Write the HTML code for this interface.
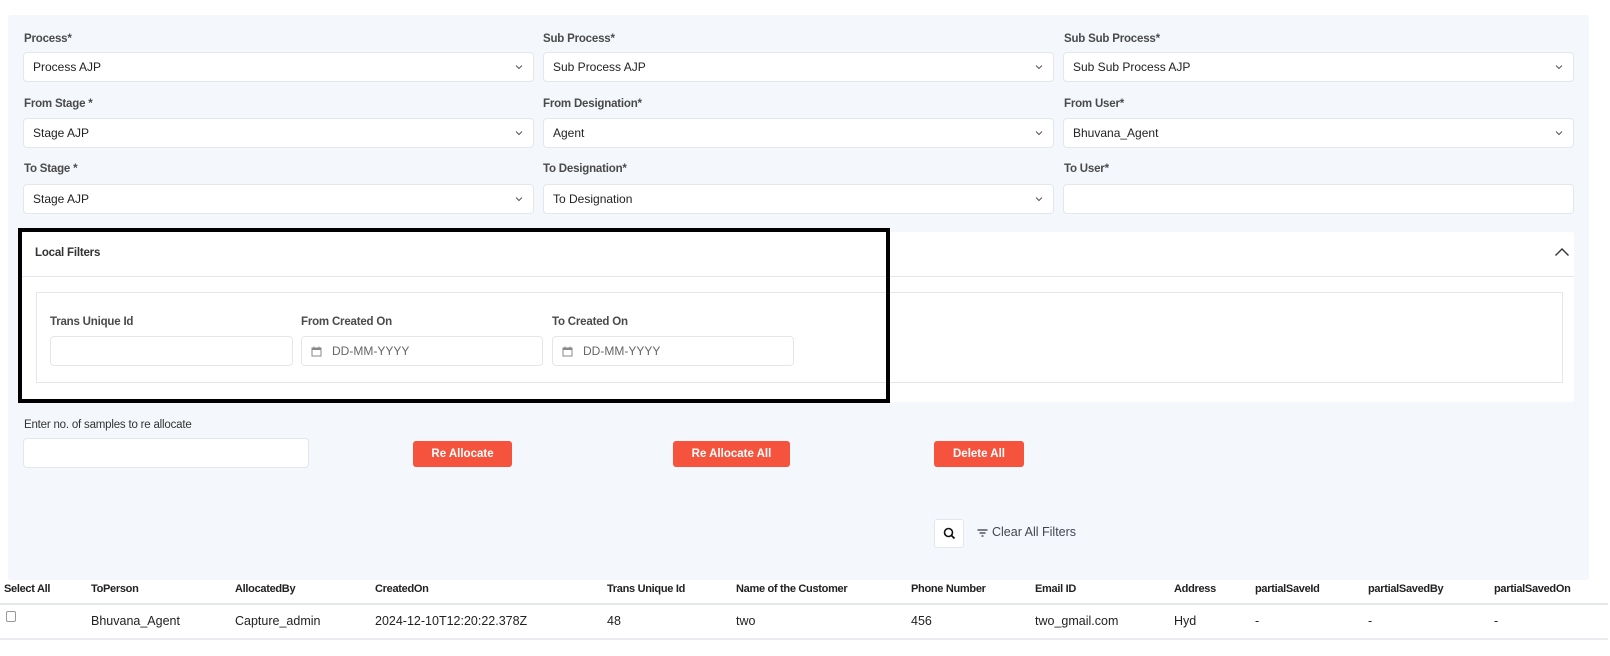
<!DOCTYPE html>
<html><head><meta charset="utf-8"><style>
*{box-sizing:border-box;margin:0;padding:0}
body{width:1610px;height:656px;background:#fff;font-family:"Liberation Sans",sans-serif;position:relative;overflow:hidden;color:#222}
.abs{position:absolute}
.panel{left:8px;top:15px;width:1581px;height:565px;background:#f4f7fb;border-radius:3px}
.lbl{position:absolute;font-size:11.5px;font-weight:bold;color:#4a4a4a;letter-spacing:-0.2px}
.sel{position:absolute;height:30px;background:#fff;border:1px solid #e3e7ed;border-radius:4px;font-size:12px;color:#222;padding-left:9px;line-height:28px}
.sel svg{position:absolute;right:10px;top:11px}
.btn{position:absolute;height:26px;background:#f5533d;color:#fff;font-size:11.5px;font-weight:bold;border-radius:3px;text-align:center;line-height:26px}
.th{position:absolute;top:583px;font-size:11px;font-weight:bold;color:#222;letter-spacing:-0.3px}
.td{position:absolute;top:614px;font-size:12.5px;color:#222}
.ph{font-size:12px;color:#666;line-height:28px;padding-left:30px}
</style></head><body>
<div class="abs panel"></div>

<div class="lbl" style="left:24px;top:33px">Process*</div>
<div class="lbl" style="left:543px;top:33px">Sub Process*</div>
<div class="lbl" style="left:1064px;top:33px">Sub Sub Process*</div>
<div class="sel" style="left:23px;top:52px;width:511px">Process AJP<svg width="8" height="6" viewBox="0 0 8 6"><path d="M1 1.5L4 4.5L7 1.5" fill="none" stroke="#555" stroke-width="1"/></svg></div>
<div class="sel" style="left:543px;top:52px;width:511px">Sub Process AJP<svg width="8" height="6" viewBox="0 0 8 6"><path d="M1 1.5L4 4.5L7 1.5" fill="none" stroke="#555" stroke-width="1"/></svg></div>
<div class="sel" style="left:1063px;top:52px;width:511px">Sub Sub Process AJP<svg width="8" height="6" viewBox="0 0 8 6"><path d="M1 1.5L4 4.5L7 1.5" fill="none" stroke="#555" stroke-width="1"/></svg></div>

<div class="lbl" style="left:24px;top:98px">From Stage *</div>
<div class="lbl" style="left:543px;top:98px">From Designation*</div>
<div class="lbl" style="left:1064px;top:98px">From User*</div>
<div class="sel" style="left:23px;top:118px;width:511px">Stage AJP<svg width="8" height="6" viewBox="0 0 8 6"><path d="M1 1.5L4 4.5L7 1.5" fill="none" stroke="#555" stroke-width="1"/></svg></div>
<div class="sel" style="left:543px;top:118px;width:511px">Agent<svg width="8" height="6" viewBox="0 0 8 6"><path d="M1 1.5L4 4.5L7 1.5" fill="none" stroke="#555" stroke-width="1"/></svg></div>
<div class="sel" style="left:1063px;top:118px;width:511px">Bhuvana_Agent<svg width="8" height="6" viewBox="0 0 8 6"><path d="M1 1.5L4 4.5L7 1.5" fill="none" stroke="#555" stroke-width="1"/></svg></div>

<div class="lbl" style="left:24px;top:163px">To Stage *</div>
<div class="lbl" style="left:543px;top:163px">To Designation*</div>
<div class="lbl" style="left:1064px;top:163px">To User*</div>
<div class="sel" style="left:23px;top:184px;width:511px">Stage AJP<svg width="8" height="6" viewBox="0 0 8 6"><path d="M1 1.5L4 4.5L7 1.5" fill="none" stroke="#555" stroke-width="1"/></svg></div>
<div class="sel" style="left:543px;top:184px;width:511px">To Designation<svg width="8" height="6" viewBox="0 0 8 6"><path d="M1 1.5L4 4.5L7 1.5" fill="none" stroke="#555" stroke-width="1"/></svg></div>
<div class="sel" style="left:1063px;top:184px;width:511px"></div>

<div class="abs" style="left:22px;top:232px;width:1552px;height:170px;background:#fff;border-radius:3px"></div>
<div class="abs" style="left:22px;top:276px;width:1552px;height:1px;background:#e3e7ed"></div>
<div class="lbl" style="left:35px;top:247px;color:#333">Local Filters</div>
<svg class="abs" style="left:1554px;top:247px" width="16" height="10" viewBox="0 0 16 10"><path d="M1.5 8.5L8 2L14.5 8.5" fill="none" stroke="#333" stroke-width="1.4"/></svg>
<div class="abs" style="left:36px;top:292px;width:1527px;height:91px;border:1px solid #e3e7ed"></div>
<div class="lbl" style="left:50px;top:316px">Trans Unique Id</div>
<div class="lbl" style="left:301px;top:316px">From Created On</div>
<div class="lbl" style="left:552px;top:316px">To Created On</div>
<div class="sel" style="left:50px;top:336px;width:243px"></div>
<div class="sel ph" style="left:301px;top:336px;width:242px">DD-MM-YYYY<svg style="left:9px;top:9px;right:auto" width="11" height="11" viewBox="0 0 11 11"><rect x="1" y="2" width="9" height="8" fill="none" stroke="#888" stroke-width="1"/><rect x="1" y="2" width="9" height="2" fill="#888"/><path d="M3 0.5V2M8 0.5V2" stroke="#888"/></svg></div>
<div class="sel ph" style="left:552px;top:336px;width:242px">DD-MM-YYYY<svg style="left:9px;top:9px;right:auto" width="11" height="11" viewBox="0 0 11 11"><rect x="1" y="2" width="9" height="8" fill="none" stroke="#888" stroke-width="1"/><rect x="1" y="2" width="9" height="2" fill="#888"/><path d="M3 0.5V2M8 0.5V2" stroke="#888"/></svg></div>
<div class="abs" style="left:18px;top:228px;width:872px;height:175px;border:4px solid #000"></div>

<div class="lbl" style="left:24px;top:419px;font-weight:normal;color:#333">Enter no. of samples to re allocate</div>
<div class="sel" style="left:23px;top:438px;width:286px"></div>
<div class="btn" style="left:413px;top:441px;width:99px">Re Allocate</div>
<div class="btn" style="left:673px;top:441px;width:117px">Re Allocate All</div>
<div class="btn" style="left:934px;top:441px;width:90px">Delete All</div>

<div class="abs" style="left:934px;top:519px;width:30px;height:29px;background:#fff;border:1px solid #e3e7ed;border-radius:3px"></div>
<svg class="abs" style="left:943px;top:527px" width="13" height="13" viewBox="0 0 13 13"><circle cx="5.5" cy="5.5" r="4" fill="none" stroke="#111" stroke-width="1.6"/><path d="M8.5 8.5L11.5 11.5" stroke="#111" stroke-width="1.8"/></svg>
<svg class="abs" style="left:977px;top:529px" width="11" height="8" viewBox="0 0 11 8"><path d="M0.5 1H10.5M2.5 4H8.5M4.5 7H6.5" stroke="#334" stroke-width="1.2"/></svg>
<div class="abs" style="left:992px;top:525px;font-size:12.5px;color:#445">Clear All Filters</div>

<div class="th" style="left:4px">Select All</div>
<div class="th" style="left:91px">ToPerson</div>
<div class="th" style="left:235px">AllocatedBy</div>
<div class="th" style="left:375px">CreatedOn</div>
<div class="th" style="left:607px">Trans Unique Id</div>
<div class="th" style="left:736px">Name of the Customer</div>
<div class="th" style="left:911px">Phone Number</div>
<div class="th" style="left:1035px">Email ID</div>
<div class="th" style="left:1174px">Address</div>
<div class="th" style="left:1255px">partialSaveId</div>
<div class="th" style="left:1368px">partialSavedBy</div>
<div class="th" style="left:1494px">partialSavedOn</div>
<div class="abs" style="left:0;top:603px;width:1608px;height:2px;background:#e3e6ea"></div>
<div class="abs" style="left:6px;top:611px;width:10px;height:11px;border:1px solid #999;border-radius:2px;background:#fff"></div>
<div class="td" style="left:91px">Bhuvana_Agent</div>
<div class="td" style="left:235px">Capture_admin</div>
<div class="td" style="left:375px">2024-12-10T12:20:22.378Z</div>
<div class="td" style="left:607px">48</div>
<div class="td" style="left:736px">two</div>
<div class="td" style="left:911px">456</div>
<div class="td" style="left:1035px">two_gmail.com</div>
<div class="td" style="left:1174px">Hyd</div>
<div class="td" style="left:1255px">-</div>
<div class="td" style="left:1368px">-</div>
<div class="td" style="left:1494px">-</div>
<div class="abs" style="left:0;top:638px;width:1608px;height:2px;background:#e8ebef"></div>
</body></html>
